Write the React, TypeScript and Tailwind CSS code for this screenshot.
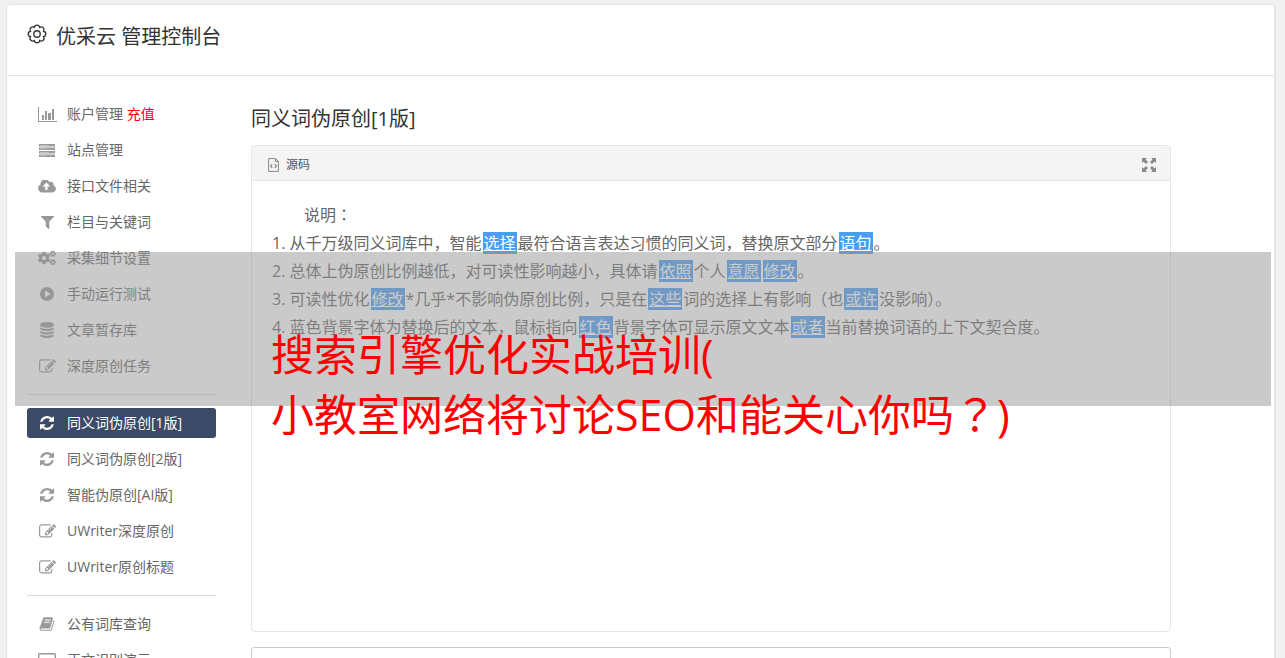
import type { ReactNode } from 'react'
import { FaCogs } from 'react-icons/fa'

const refreshPath =
    'M1511 928q0 5-1 7-64 268-268 434.5t-478 166.5q-146 0-282.500-55t-243.500-157l-129 129q-19 19-45 19t-45-19-19-45v-448q0-26 19-45t45-19h448q26 0 45 19t19 45-19 45l-137 137q71 66 161 102t187 36q134 0 250-65t186-179q11-17 53-117 8-23 30-23h192q13 0 22.500 9.500t9.500 22.500zm25-800v448q0 26-19 45t-45 19h-448q-26 0-45-19t-19-45 19-45l138-138q-148-137-349-137-134 0-250 65t-186 179q-11 17-53 117-8 23-30 23h-199q-13 0-22.500-9.500t-9.500-22.500v-7q65-268 270-434.500t480-166.500q146 0 284 55.500t245 156.500l130-129q19-19 45-19t45 19 19 45z'
const editPath =
    'M888 1184l116-116-152-152-116 116v56h96v96h56zm440-720q-16-16-33 1l-350 350q-17 17-1 33t33-1l350-350q17-17 1-33zm80 594v190q0 119-84.5 203.5t-203.5 84.5h-832q-119 0-203.5-84.5t-84.5-203.5v-832q0-119 84.5-203.5t203.5-84.5h832q63 0 117 25 15 7 18 23 3 17-9 29l-49 49q-14 14-32 8-23-6-45-6h-832q-66 0-113 47t-47 113v832q0 66 47 113t113 47h832q66 0 113-47t47-113v-126q0-13 9-22l64-64q15-15 35-7t20 29zm-96-738l288 288-672 672h-288v-288zm444 132l-92 92-288-288 92-92q28-28 68-28t68 28l152 152q28 28 28 68t-28 68z'
const cloudPath =
    'M1280 864q0-14-9-23l-352-352q-9-9-23-9t-23 9l-351 351q-10 12-10 24 0 14 9 23t23 9h224v352q0 13 9.5 22.5t22.5 9.5h192q13 0 22.5-9.5t9.5-22.5v-352h224q13 0 22.5-9.5t9.5-22.5zm640 288q0 159-112.5 271.5t-271.5 112.5h-1088q-185 0-316.5-131.5t-131.5-316.5q0-130 70-240t188-165q-2-30-2-43 0-212 150-362t362-150q156 0 285.5 87t188.5 231q71-62 166-62 106 0 181 75t75 181q0 76-41 138 130 31 213.5 135.5t83.5 238.5z'
const filterPath =
    'M1403 39q17 41-14 70l-493 493v742q0 42-39 59-13 5-25 5-27 0-45-19l-256-256q-19-19-19-45v-486l-493-493q-31-29-14-70 17-39 59-39h1280q42 0 59 39z'
const databasePath =
    'M768 768q237 0 443-43t325-127v170q0 69-103 128t-280 93.5-385 34.5-385-34.5-280-93.5-103-128v-170q119 84 325 127t443 43zm0 768q237 0 443-43t325-127v170q0 69-103 128t-280 93.5-385 34.5-385-34.5-280-93.5-103-128v-170q119 84 325 127t443 43zm0-384q237 0 443-43t325-127v170q0 69-103 128t-280 93.5-385 34.5-385-34.5-280-93.5-103-128v-170q119 84 325 127t443 43zm0-1152q208 0 385 34.5t280 93.5 103 128v128q0 69-103 128t-280 93.5-385 34.5-385-34.5-280-93.5-103-128v-128q0-69 103-128t280-93.5 385-34.5z'
const bookPath =
    'M1703 478q40 57 18 129l-275 906q-19 64-76.5 107.5t-122.5 43.5h-923q-77 0-148.5-53.5t-99.5-131.5q-24-67-2-127 0-4 3-27t4-37q1-8-3-21.5t-3-19.5q2-11 8-21t16.5-23.5 16.5-23.5q23-38 45-91.5t30-91.5q3-10 .5-30t-.5-28q3-11 17-28t17-23q21-36 42-92t25-90q1-9-2.5-32t.5-28q4-13 22-30.5t22-22.5q19-26 42.5-84.5t27.5-96.5q1-8-3-25.5t-2-26.5q2-8 9-18t18-23 17-21q8-12 16.5-30.5t15-35 16-36 19.5-32 26.5-23.5 36-11.5 47.5 5.5l-1 3q38-9 51-9h761q74 0 114 56t18 130l-274 906q-36 119-71.5 153.5t-128.5 34.5h-869q-27 0-38 15-11 16-1 43 24 70 144 70h923q29 0 56-15.5t35-41.5l300-987q7-22 5-57 38 15 59 43zm-1064 2q-4 13 2 22.5t20 9.5h608q13 0 25.5-9.5t16.5-22.5l21-64q4-13-2-22.5t-20-9.5h-608q-13 0-25.5 9.5t-16.5 22.5zm-83 256q-4 13 2 22.5t20 9.5h608q13 0 25.5-9.5t16.5-22.5l21-64q4-13-2-22.5t-20-9.5h-608q-13 0-25.5 9.5t-16.5 22.5z'

function PathIcon({ box, d, className }: { box: string; d: string; className: string }) {
    return (
        <svg viewBox={box} className={className} fill="currentColor" aria-hidden="true">
            <path d={d} />
        </svg>
    )
}

const refreshIcon = <PathIcon box="0 0 1536 1536" d={refreshPath} className="size-3.5" />
const editIcon = <PathIcon box="0 0 1792 1792" d={editPath} className="size-[17px]" />

const chartIcon = (
    <svg viewBox="0 0 19 15" className="w-[19px] h-[15px] shrink-0" fill="currentColor" aria-hidden="true">
        <path d="M0 0h1v14h18v1H0z" />
        <path d="M4 8h2v5H4zM7 4h2v9H7zM10 6h3v7h-3zM14 2h2v11h-2z" />
    </svg>
)

const serverIcon = (
    <svg viewBox="0 0 16 13" className="w-4 h-[13px]" fill="currentColor" aria-hidden="true">
        <path d="M0 0h16v2.600H0zM0 3.400h16v2.600H0zM0 6.900h16v2.600H0zM0 10.400h16V13H0z" />
        <path d="M1 1h9v.8H1zM13 1h1v.8h-1zM1 4.400h7v.8H1zM11 4.400h1v.8h-1zM1 7.900h9v.8H1zM13 7.900h1v.8h-1zM1 11.400h7v.8H1zM11 11.400h1v.8h-1z" fill="#fff" fillOpacity=".5" />
    </svg>
)

const playIcon = (
    <svg viewBox="0 0 14 14" className="size-3.5" fill="currentColor" aria-hidden="true">
        <path fillRule="evenodd" d="M7 0a7 7 0 1 1 0 14A7 7 0 0 1 7 0zM5 3.600v6.800L10.800 7z" />
    </svg>
)

const screenIcon = (
    <svg viewBox="0 0 18 14" className="w-[18px] h-3.5" fill="none" stroke="currentColor" aria-hidden="true">
        <rect x="0.700" y="0.700" width="16.600" height="10.600" rx="1" strokeWidth="1.400" />
        <path d="M5 13.300h8" strokeWidth="1.400" />
    </svg>
)

type Item = { label: string; icon: ReactNode; extra?: string; active?: boolean }

const groups: Item[][] = [
    [
        { label: '账户管理', icon: chartIcon, extra: '充值' },
        { label: '站点管理', icon: serverIcon },
        { label: '接口文件相关', icon: <PathIcon box="0 200 1920 1400" d={cloudPath} className="w-[18px] h-[13px]" /> },
        { label: '栏目与关键词', icon: <PathIcon box="0 0 1408 1408" d={filterPath} className="size-[13px]" /> },
        { label: '采集细节设置', icon: <FaCogs className="size-[18px]" /> },
        { label: '手动运行测试', icon: playIcon },
        { label: '文章暂存库', icon: <PathIcon box="0 0 1536 1792" d={databasePath} className="w-3.5 h-4" /> },
        { label: '深度原创任务', icon: editIcon }
    ],
    [
        { label: '同义词伪原创[1版]', icon: refreshIcon, active: true },
        { label: '同义词伪原创[2版]', icon: refreshIcon },
        { label: '智能伪原创[AI版]', icon: refreshIcon },
        { label: 'UWriter深度原创', icon: editIcon },
        { label: 'UWriter原创标题', icon: editIcon }
    ],
    [
        { label: '公有词库查询', icon: <PathIcon box="0 0 1792 1792" d={bookPath} className="size-4" /> },
        { label: '正文识别演示', icon: screenIcon }
    ]
]

// words between braces were swapped by the rewriter
const lines = [
    '1. 从千万级同义词库中，智能{选择}最符合语言表达习惯的同义词，替换原文部分{语句}。',
    '2. 总体上伪原创比例越低，对可读性影响越小，具体请{依照}个人{意愿}{修改}。',
    '3. 可读性优化{修改}*几乎*不影响伪原创比例，只是在{这些}词的选择上有影响（也{或许}没影响）。',
    '4. 蓝色背景字体为替换后的文本，鼠标指向{红色}背景字体可显示原文文本{或者}当前替换词语的上下文契合度。'
]

function Line({ text }: { text: string }) {
    return (
        <p>
            {text.split(/[{}]/).map((part, i) =>
                i % 2 === 1 ? (
                    <u key={i} className="mx-px px-px bg-[#4a9df5] text-white">
                        {part}
                    </u>
                ) : (
                    part
                )
            )}
        </p>
    )
}

// full-width mark set in the middle of its cell
function Mark({ children }: { children: string }) {
    return <span className="leading-none font-['Noto_Sans_CJK_TC',sans-serif]">{children}</span>
}

function Sidebar() {
    return (
        <nav className="w-[189px] shrink-0 pt-[23px] text-sm">
            {groups.map((group, g) => (
                <ul
                    key={g}
                    className={`flex flex-col gap-1.5 ${g > 0 ? 'mt-[13px] pt-[13px] border-t border-[#dcdcdc]' : ''}`}
                >
                    {group.map((item) => (
                        <li
                            key={item.label}
                            className={`flex items-center h-[30px] px-2.5 gap-2.5 rounded-[3px] ${
                                item.active ? 'bg-[#3b4a66] text-white' : 'text-[#666]'
                            }`}
                        >
                            <span
                                className={`flex w-5 shrink-0 justify-center ${item.active ? 'text-white' : 'text-[#999]'}`}
                            >
                                {item.icon}
                            </span>
                            <span className="whitespace-nowrap">
                                <a href="#">{item.label}</a>
                                {item.extra && (
                                    <>
                                        {' '}
                                        <a href="#" className="text-[#f00]">
                                            {item.extra}
                                        </a>
                                    </>
                                )}
                            </span>
                        </li>
                    ))}
                </ul>
            ))}
        </nav>
    )
}

function Editor() {
    return (
        <section className="rounded border border-[#e5e5e5]">
            <div className="flex items-center justify-between h-[35px] px-3.5 pt-1 rounded-t border-b border-[#e5e5e5] bg-[#f4f4f4]">
                <button className="flex items-center gap-[7px] pl-0.5 text-xs text-[#555]">
                    <svg viewBox="0 0 11 14" className="w-[11px] h-3.5" fill="none" stroke="#888" aria-hidden="true">
                        <path d="M.6.600h6.900l2.900 2.900v9.900H.6zM7.500.600v2.900h2.900" />
                        <path d="M4.300 6.200L2.500 8l1.800 1.800M6.700 6.200L8.500 8 6.700 9.800" strokeWidth="1.200" />
                    </svg>
                    源码
                </button>
                <button aria-label="全屏" className="text-[#888]">
                    <svg viewBox="0 0 14 14" className="size-3.5" fill="currentColor" aria-hidden="true">
                        <path d="M0 0h5L3.500 1.500 6 4 4 6 1.500 3.500 0 5zM14 0v5l-1.500-1.500L10 6 8 4l2.500-2.500L9 0zM0 14V9l1.500 1.500L4 8l2 2-2.500 2.500L5 14zM14 14H9l1.500-1.500L8 10l2-2 2.500 2.500L14 9z" />
                    </svg>
                </button>
            </div>
            <div className="min-h-[450px] p-5 text-base leading-7 text-[#666]">
                <p className="indent-8">
                    说明<Mark>：</Mark>
                </p>
                {lines.map((text) => (
                    <Line key={text} text={text} />
                ))}
            </div>
        </section>
    )
}

export default function App() {
    return (
        <div className="relative h-screen overflow-hidden bg-[#f1f1f1] pt-1 pl-1.5 pr-[9px] font-['Open_Sans','Noto_Sans_CJK_SC',sans-serif]">
            <div className="rounded-t border border-r-2 border-[#e5e5e5] bg-white">
                <header className="flex h-[71px] items-start gap-[9px] border-b border-[#e5e5e5] px-5 pt-[18px] text-[#333]">
                    <svg viewBox="0 0 18 18" className="mt-px size-5" fill="none" stroke="currentColor" strokeWidth="1.200" aria-hidden="true">
                        <path d="M6.550 3.090a2.500 2.500 0 0 1 4.900 0a2.500 2.500 0 0 1 3.460 3.460a2.500 2.500 0 0 1 0 4.900a2.500 2.500 0 0 1-3.460 3.460a2.500 2.500 0 0 1-4.900 0a2.500 2.500 0 0 1-3.460-3.460a2.500 2.500 0 0 1 0-4.900a2.500 2.500 0 0 1 3.460-3.460z" />
                        <circle cx="9" cy="9" r="2.900" />
                    </svg>
                    <h1 className="text-xl">优采云 管理控制台</h1>
                </header>
                <div className="flex gap-[35px] px-5">
                    <Sidebar />
                    <main className="flex min-w-0 max-w-[920px] flex-1 flex-col pt-[29px]">
                        <h2 className="mb-3 text-xl text-[#333]">同义词伪原创[1版]</h2>
                        <Editor />
                        <div className="mt-[15px] h-20 rounded-[3px] border border-[#ccc]" />
                    </main>
                </div>
            </div>

            {/* caption band laid over the page */}
            <div className="absolute left-[15px] right-3.5 top-[252px] h-[154px] bg-[#969696]/50 pt-[73px] pl-64">
                <p className="text-[43px] leading-[60px] text-[#f00]">
                    搜索引擎优化实战培训(
                    <br />
                    小教室网络将讨论SEO和能关心你吗<Mark>？</Mark>)
                </p>
            </div>
        </div>
    )
}
